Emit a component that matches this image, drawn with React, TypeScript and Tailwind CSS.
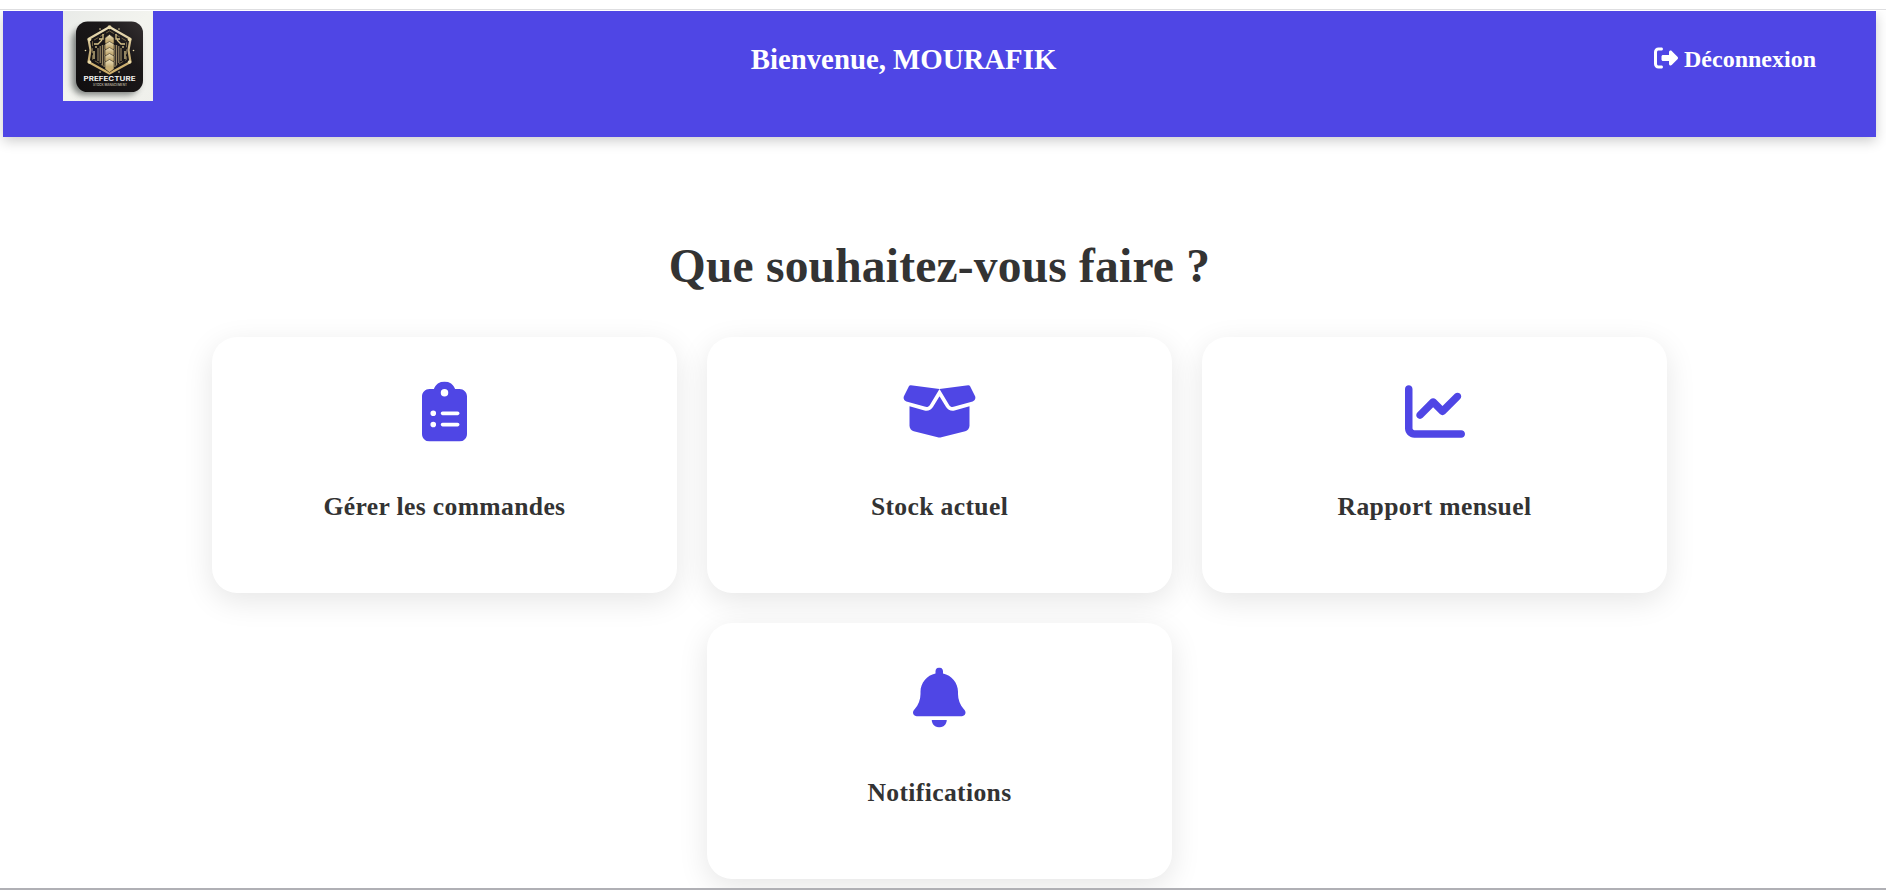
import {
  FaBell,
  FaBoxOpen,
  FaChartLine,
  FaClipboardList,
  FaRightFromBracket,
} from "react-icons/fa6";
import type { IconType } from "react-icons";

const cards: { label: string; Icon: IconType; width: string }[] = [
  { label: "Gérer les commandes", Icon: FaClipboardList, width: "w-[45px]" },
  { label: "Stock actuel", Icon: FaBoxOpen, width: "w-[75px]" },
  { label: "Rapport mensuel", Icon: FaChartLine, width: "w-[60px]" },
  { label: "Notifications", Icon: FaBell, width: "w-[52.5px]" },
];

function Logo() {
  return (
    <svg viewBox="0 0 90 90" className="block size-[90px] shrink-0" role="img" aria-label="Prefecture">
      <defs>
        <linearGradient id="paper" x1="0" y1="0" x2="1" y2="1">
          <stop offset="0" stopColor="#e9ebe8" />
          <stop offset="0.5" stopColor="#f3f4ef" />
          <stop offset="1" stopColor="#efefeb" />
        </linearGradient>
        <linearGradient id="tile" x1="1" y1="0" x2="0" y2="1">
          <stop offset="0" stopColor="#343031" />
          <stop offset="0.35" stopColor="#1b1819" />
          <stop offset="1" stopColor="#100e0f" />
        </linearGradient>
        <linearGradient id="gold" x1="0" y1="0" x2="0" y2="1">
          <stop offset="0" stopColor="#efe3bd" />
          <stop offset="0.55" stopColor="#c4ad78" />
          <stop offset="1" stopColor="#d3b26c" />
        </linearGradient>
        <filter id="soft" x="-30%" y="-30%" width="160%" height="160%">
          <feGaussianBlur stdDeviation="3.2" />
        </filter>
      </defs>
      <rect width="90" height="90" fill="url(#paper)" />
      <rect x="9" y="17" width="67" height="67" rx="12" fill="#555a58" opacity="0.75" filter="url(#soft)" />
      <rect x="13" y="10.5" width="67" height="70.5" rx="11.5" fill="url(#tile)" />
      <path d="M46.5 16 67.5 28 65.5 39 67.5 51 46.5 62.5 25.5 51 27.5 39 25.5 28Z" fill="none" stroke="url(#gold)" strokeWidth="2.2" strokeLinejoin="round" />
      <path d="M46.5 20 63.5 30V48.5L46.5 58.5 29.5 48.5V30Z" fill="none" stroke="#7d6d4b" strokeWidth="0.9" strokeDasharray="5 2" />
      <path d="M35 37V50M37.2 35V52M39.4 34V54M41.3 34V56M51.7 34V56M53.6 34V54M55.8 35V52M58 37V50" stroke="#a08e69" strokeWidth="1.1" />
      <path d="M31 40V48M62 40V48M31 33H35L39 29M62 33H58L54 29M36 28H40V23M57 28H53V23M33 37V35M60 37V35" fill="none" stroke="#d8c48c" strokeWidth="1.3" />
      <g fill="url(#gold)" stroke="#382f22" strokeWidth="0.6">
        <path d="M42 27 46.5 23.5 51 27V32L46.5 34.5 42 32Z" />
        <path d="M42 33 46.5 30.5 51 33V38L46.5 40.5 42 38Z" />
        <path d="M42 39 46.5 36.5 51 39V44L46.5 46.5 42 44Z" />
        <path d="M42 45 46.5 42.5 51 45V50L46.5 52.5 42 50Z" />
        <path d="M42 51 46.5 48.5 51 51V58L46.5 61.5 42 58Z" />
      </g>
      <g fill="#e8d9a9">
        <circle cx="46.5" cy="16.3" r="2" />
        <circle cx="26.5" cy="28.5" r="1.8" />
        <circle cx="66.5" cy="28.5" r="1.8" />
        <circle cx="26.5" cy="51" r="1.8" />
        <circle cx="66.5" cy="51" r="1.8" />
        <circle cx="37" cy="18" r="0.8" />
        <circle cx="56" cy="18" r="0.8" />
        <circle cx="22.5" cy="39.5" r="0.8" />
        <circle cx="70.5" cy="39.5" r="0.8" />
        <circle cx="37" cy="61" r="0.8" />
        <circle cx="56" cy="61" r="0.8" />
      </g>
      <text x="46.5" y="70.3" textAnchor="middle" textLength="52" lengthAdjust="spacingAndGlyphs" fill="#f1f0ed" fontFamily="Inter, sans-serif" fontWeight="700" fontSize="6.5">PREFECTURE</text>
      <text x="47" y="75.3" textAnchor="middle" textLength="34" lengthAdjust="spacingAndGlyphs" fill="#b5ae9d" fontFamily="Inter, sans-serif" fontWeight="600" fontSize="3.2">STOCK MANAGEMENT</text>
    </svg>
  );
}

export default function App() {
  return (
    <div className="flex h-[890px] flex-col overflow-hidden border-b-2 border-[#b0b0b5] bg-white font-['Liberation_Serif',serif] font-bold">
      <div className="mb-px h-2.5 shrink-0 border-b border-[#dedee0]" />
      <div className="flex min-h-0 flex-1 flex-col overflow-hidden pl-[3px] pr-2.5">
        <header className="flex h-[126px] shrink-0 items-start justify-between bg-[#4f46e5] px-[60px] text-white shadow-[0_4px_12px_rgba(0,0,0,0.2)]">
          <Logo />
          <h2 className="pt-8 text-[28.8px] leading-[33px]">Bienvenue, MOURAFIK</h2>
          <a className="flex items-center gap-1.5 pt-[35px] text-2xl leading-[27px]">
            <FaRightFromBracket className="-mt-1 size-6" />
            Déconnexion
          </a>
        </header>
        <main className="flex flex-col items-center text-[#333]">
          <h1 className="mt-[101px] text-[47.5px] leading-[56px] tracking-[0.2px]">Que souhaitez-vous faire ?</h1>
          <div className="mt-[43px] flex w-[1455px] flex-wrap justify-center gap-[30px]">
            {cards.map(({ label, Icon, width }) => (
              <button key={label} className="flex h-64 w-[465px] flex-col items-center rounded-[25px] bg-white pt-11 shadow-[0_8px_30px_rgba(0,0,0,0.1)]">
                <Icon className={`h-[60px] translate-y-[0.4px] text-[#4f46e5] ${width}`} />
                <span className="mt-[51px] text-[25.6px] leading-[30px] tracking-[0.36px]">{label}</span>
              </button>
            ))}
          </div>
        </main>
      </div>
    </div>
  );
}
